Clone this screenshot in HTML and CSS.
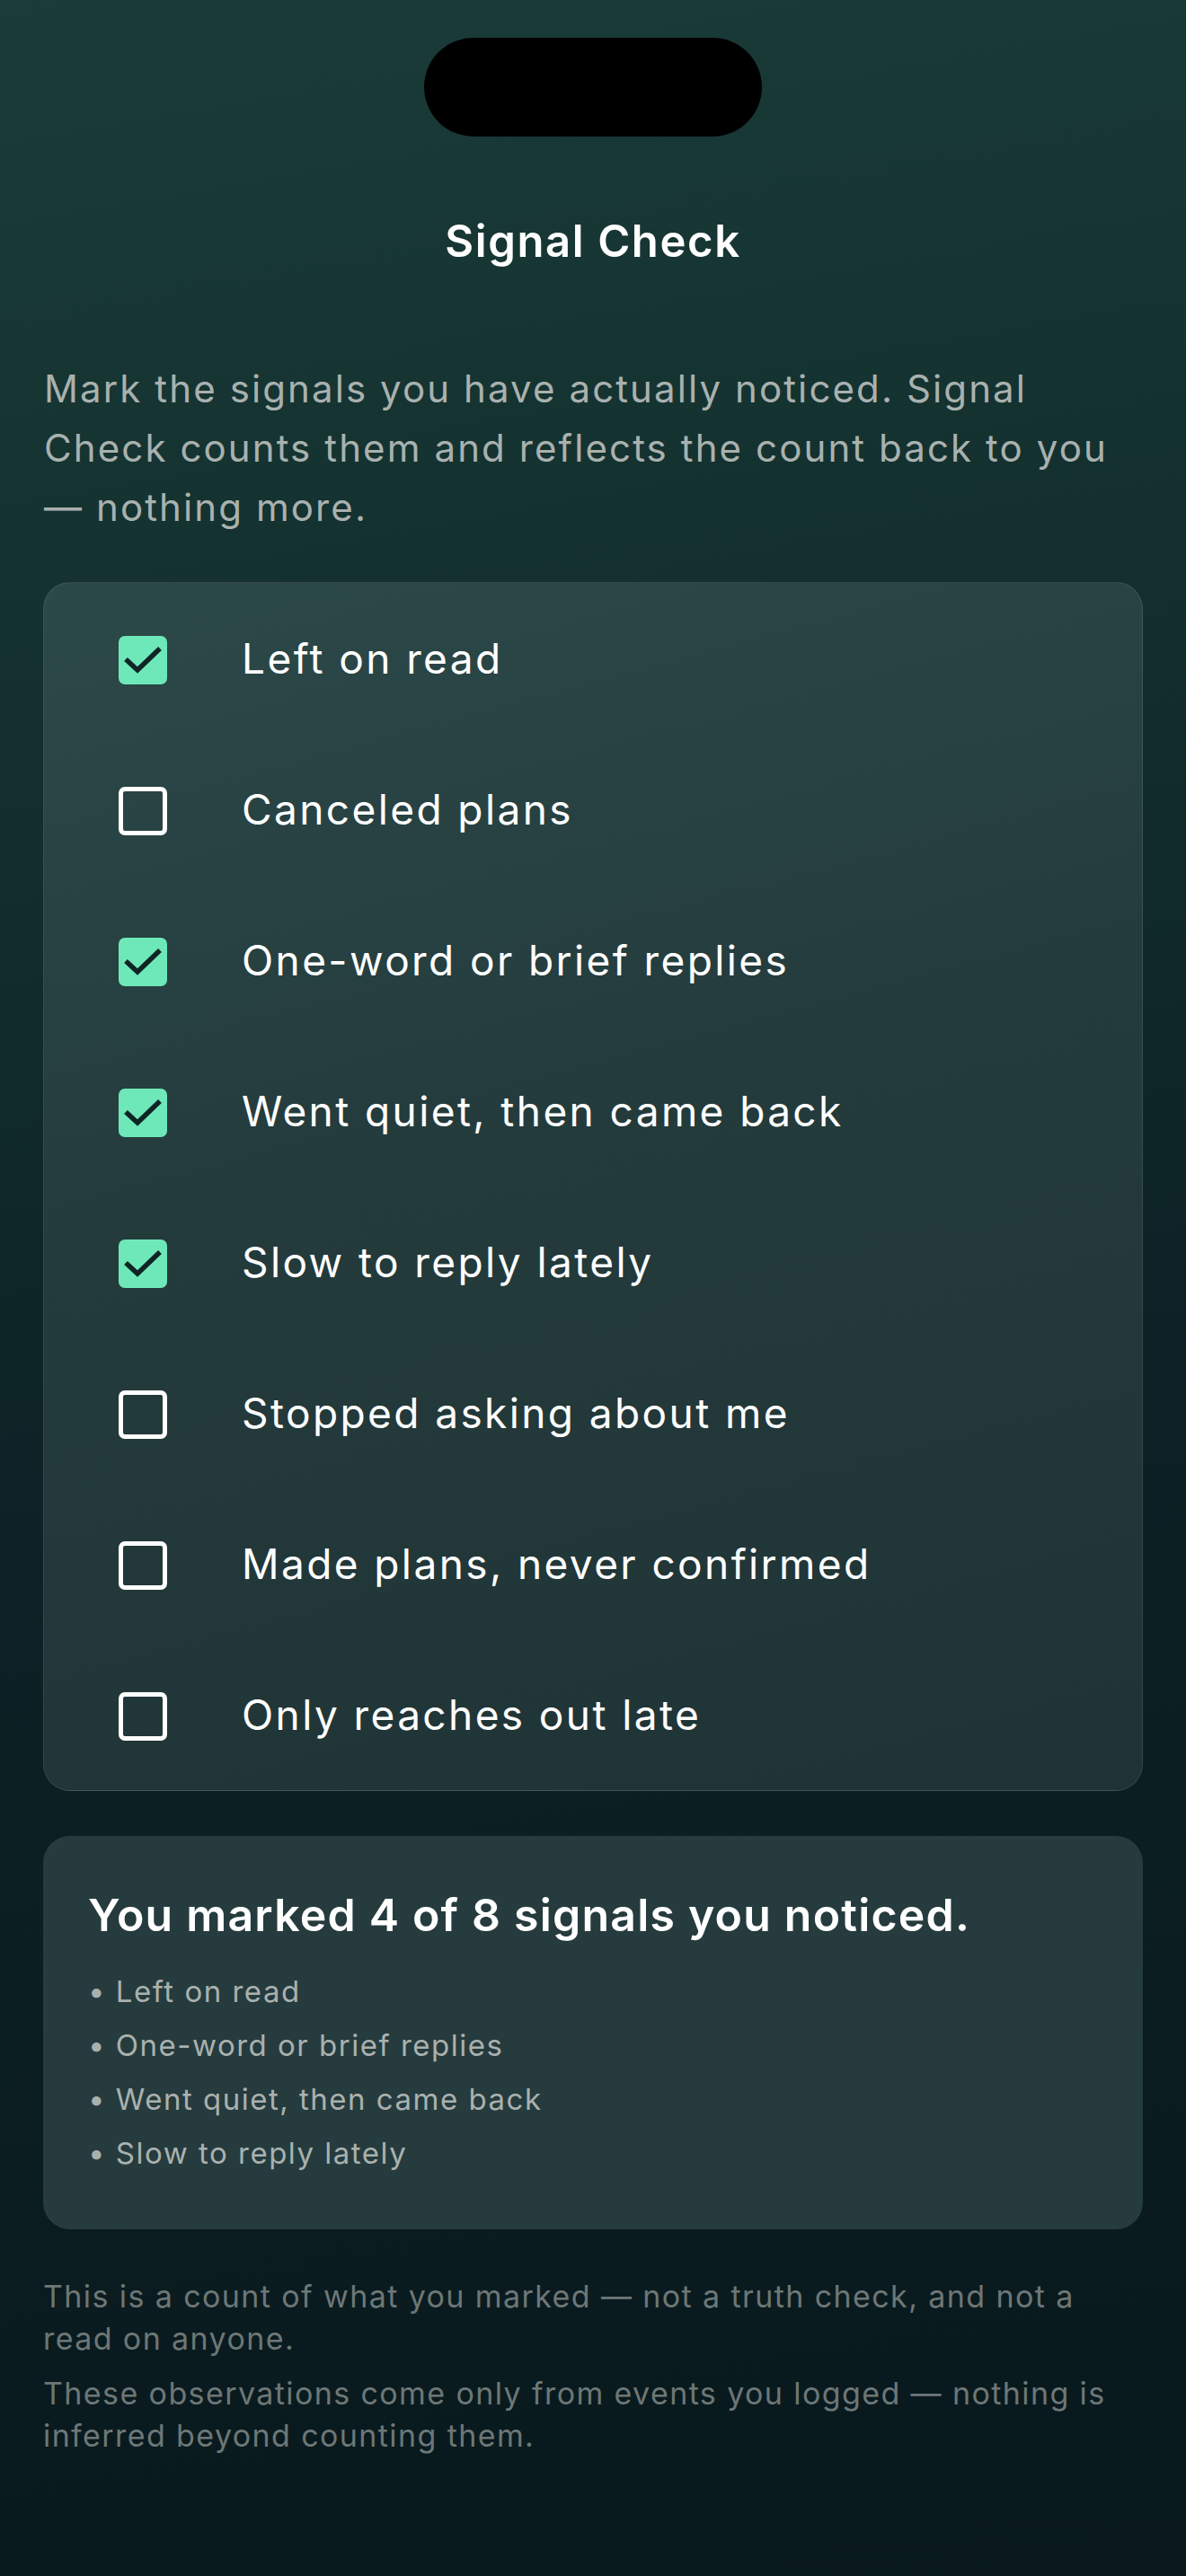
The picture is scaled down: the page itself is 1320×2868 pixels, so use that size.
FILE: index.html
```html
<!DOCTYPE html>
<html lang="en">
<head>
  <meta charset="UTF-8" />
  <meta name="viewport" content="width=device-width, initial-scale=1.0" />
  <title>Signal Check</title>
  <link rel="stylesheet" href="styles.css">
</head>
<body>

  <div class="screen">
    <div class="island"></div>

    <h1 class="title">Signal Check</h1>

    <p class="intro">Mark the signals you have actually noticed. Signal Check counts them and reflects the count back to you — nothing more.</p>

    <div class="list">
      <div class="row"><span class="box on"><svg viewBox="0 0 54 54"><path d="M8 26 L21 38 L46 14" /></svg></span><span class="label">Left on read</span></div>
      <div class="row"><span class="box"></span><span class="label">Canceled plans</span></div>
      <div class="row"><span class="box on"><svg viewBox="0 0 54 54"><path d="M8 26 L21 38 L46 14" /></svg></span><span class="label">One-word or brief replies</span></div>
      <div class="row"><span class="box on"><svg viewBox="0 0 54 54"><path d="M8 26 L21 38 L46 14" /></svg></span><span class="label">Went quiet, then came back</span></div>
      <div class="row"><span class="box on"><svg viewBox="0 0 54 54"><path d="M8 26 L21 38 L46 14" /></svg></span><span class="label">Slow to reply lately</span></div>
      <div class="row"><span class="box"></span><span class="label">Stopped asking about me</span></div>
      <div class="row"><span class="box"></span><span class="label">Made plans, never confirmed</span></div>
      <div class="row"><span class="box"></span><span class="label">Only reaches out late</span></div>
    </div>

    <div class="summary">
      <h2>You marked 4 of 8 signals you noticed.</h2>
      <ul>
        <li>• Left on read</li>
        <li>• One-word or brief replies</li>
        <li>• Went quiet, then came back</li>
        <li>• Slow to reply lately</li>
      </ul>
    </div>

    <div class="notes">
      <p>This is a count of what you marked — not a truth check, and not a read on anyone.</p>
      <p>These observations come only from events you logged — nothing is inferred beyond counting them.</p>
    </div>
  </div>

</body>
</html>
```

FILE: styles.css
```css
html, body {
  margin: 0;
  padding: 0;
}

body {
  font-family: Inter, "Noto Sans", sans-serif;
  background: linear-gradient(170deg, #1a3c39 0%, #13302e 25%, #0d2226 55%, #08181c 100%);
  color: #f2f4f3;
  min-height: 2868px;
}

.screen {
  padding: 42px 48px 0;
  display: flex;
  flex-direction: column;
}

.island {
  align-self: center;
  width: 376px;
  height: 110px;
  border-radius: 55px;
  background: #000;
}

.title {
  margin: 87px 0 0;
  text-align: center;
  font-size: 49px;
  line-height: 60px;
  font-weight: 600;
  letter-spacing: 1.6px;
  color: #ffffff;
}

.intro {
  margin: 101px 0 0;
  padding-left: 1px;
  font-size: 42px;
  line-height: 66px;
  letter-spacing: 2.1px;
  color: #a9b1af;
}

.list {
  margin-top: 50px;
  border: 1px solid rgba(255, 255, 255, 0.09);
  border-radius: 30px;
  background: linear-gradient(165deg, #2c4949 0%, #243b3c 45%, #1f3335 100%);
}

.row {
  height: 168px;
  display: flex;
  align-items: center;
  padding-left: 83px;
  gap: 83px;
}

.box {
  width: 54px;
  height: 54px;
  box-sizing: border-box;
  border: 5px solid #ffffff;
  border-radius: 7px;
  flex-shrink: 0;
  margin-top: 4px;
}

.box.on {
  border: none;
  background: #6ee8b8;
}

.box svg {
  display: block;
  width: 54px;
  height: 54px;
}

.box path {
  fill: none;
  stroke: #0f2525;
  stroke-width: 5.5;
}

.label {
  font-size: 46px;
  letter-spacing: 2.4px;
  color: #ffffff;
}

.summary {
  margin-top: 50px;
  background: #263b3d;
  border-radius: 30px;
  padding: 58px 50px 55px;
}

.summary h2 {
  margin: 0;
  font-size: 50px;
  line-height: 60px;
  font-weight: 600;
  letter-spacing: 1.2px;
  color: #ffffff;
}

.summary ul {
  list-style: none;
  margin: 25px 0 0;
  padding: 0;
}

.summary li {
  font-size: 33px;
  line-height: 60px;
  letter-spacing: 1.5px;
  color: #a9b1af;
}

.notes {
  margin-top: 51px;
}

.notes p {
  margin: 0 0 14px;
  font-size: 34px;
  line-height: 47px;
  letter-spacing: 1.4px;
  color: #6d7776;
}
```
